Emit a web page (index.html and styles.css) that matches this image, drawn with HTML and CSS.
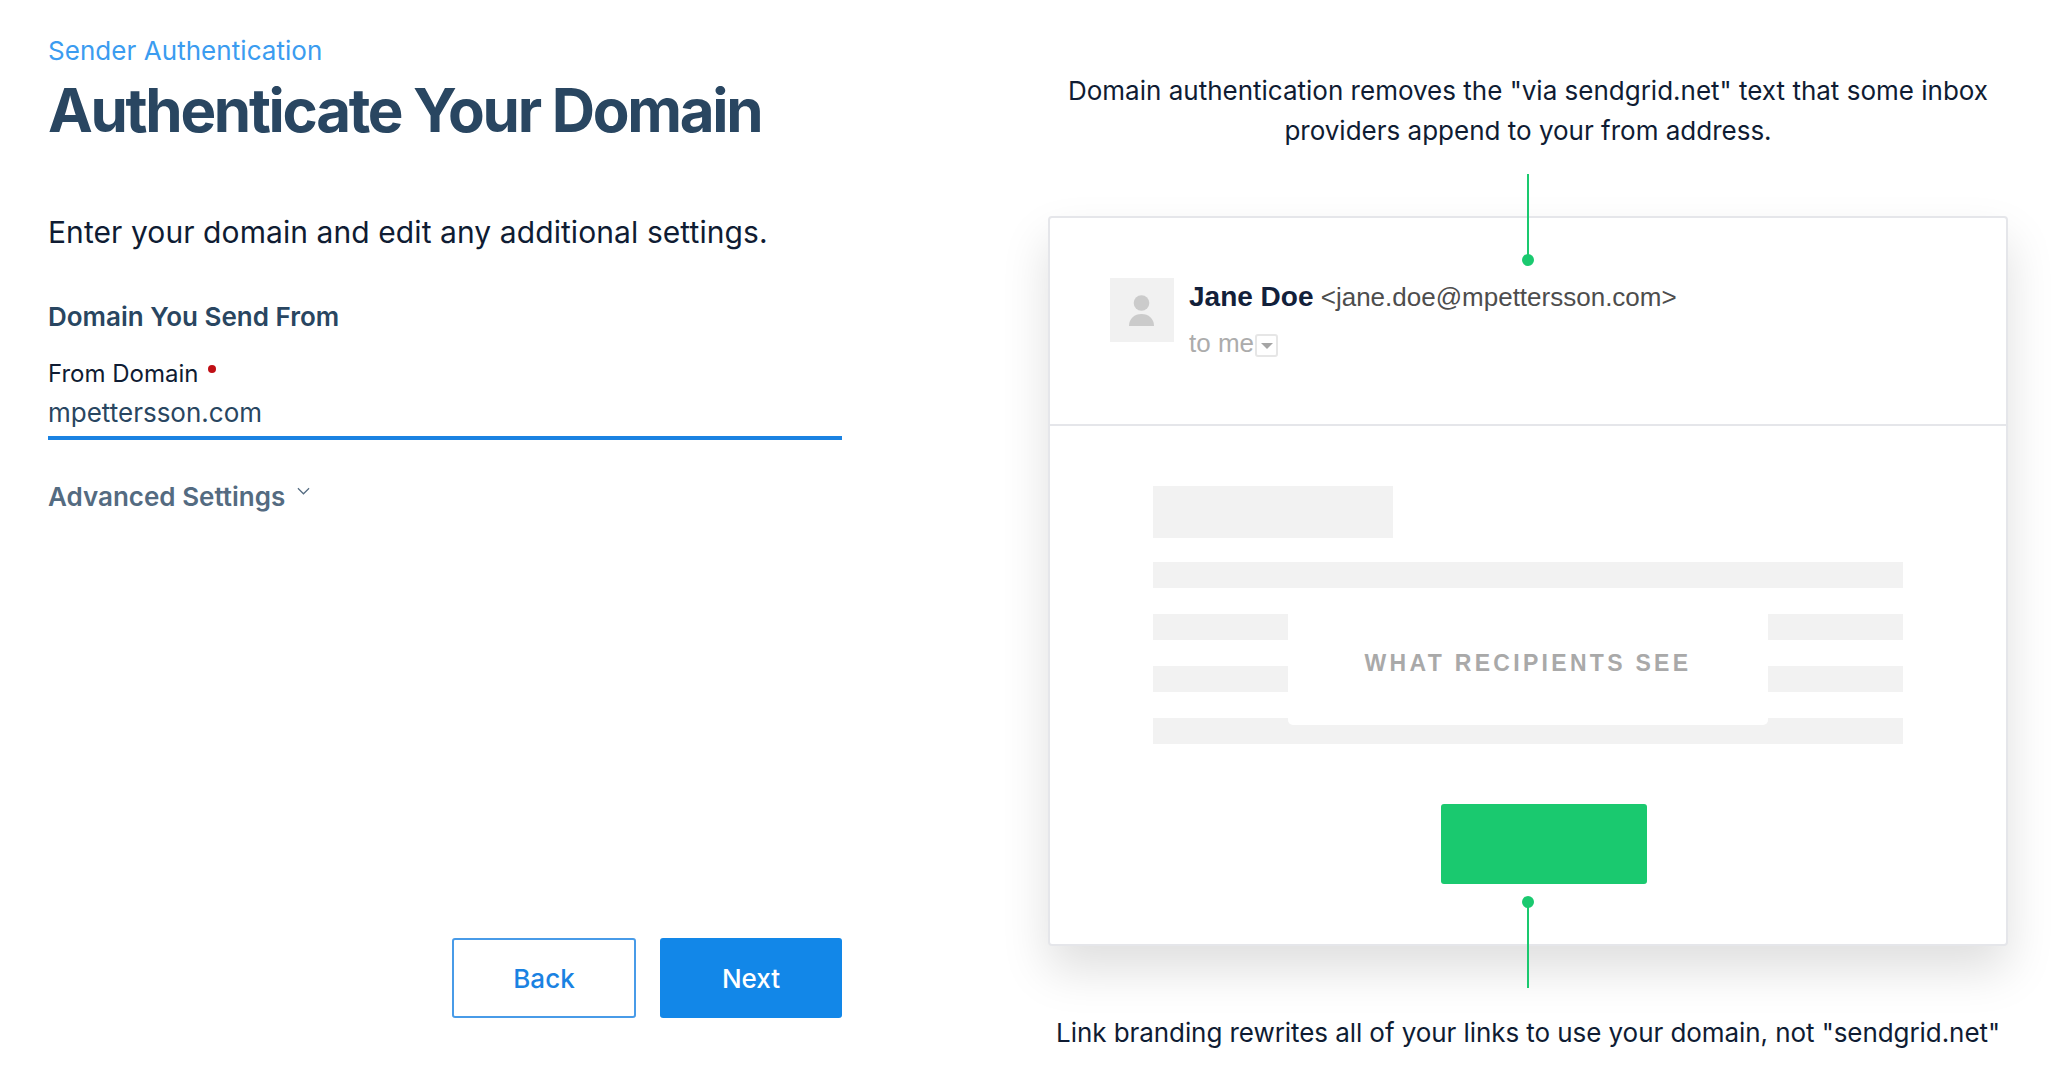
FILE: index.html
```html
<!DOCTYPE html>
<html lang="en">
<head>
<meta charset="utf-8">
<title>Authenticate Your Domain</title>
<link rel="stylesheet" href="styles.css">
</head>
<body>
<main class="page">
  <section class="form">
    <div class="eyebrow">Sender Authentication</div>
    <h1 class="title">Authenticate Your Domain</h1>
    <p class="intro">Enter your domain and edit any additional settings.</p>
    <h2 class="section-head">Domain You Send From</h2>
    <div class="field">
      <div class="field-label">From Domain <span class="required"></span></div>
      <div class="field-value">mpettersson.com</div>
    </div>
    <div class="advanced">
      <span>Advanced Settings</span>
      <svg class="chevron" viewBox="0 0 14 8" width="13" height="8" aria-hidden="true"><path d="M1 1l6 6 6-6" fill="none" stroke="#546b81" stroke-width="1.3"/></svg>
    </div>
    <div class="actions">
      <button class="btn btn-back">Back</button>
      <button class="btn btn-next">Next</button>
    </div>
  </section>
  <section class="preview">
    <p class="note note-top">Domain authentication removes the "via sendgrid.net" text that some inbox providers append to your from address.</p>
    <div class="card">
      <span class="pin pin-top"></span>
      <header class="mail-head">
        <div class="avatar">
          <svg viewBox="0 0 64 64" width="64" height="64" aria-hidden="true"><ellipse cx="31.500" cy="25" rx="7.800" ry="7.800" fill="#cbcbcb"/><path d="M19 48c0-7.500 5.500-12 12.500-12s12.500 4.500 12.500 12z" fill="#cbcbcb"/></svg>
        </div>
        <div class="sender">
          <div class="from-line"><strong class="name">Jane Doe</strong> <span class="addr">&lt;jane.doe@mpettersson.com&gt;</span></div>
          <div class="to-line">to me<span class="caret-box"><span class="caret"></span></span></div>
        </div>
      </header>
      <div class="mail-body">
        <div class="skel skel-title"></div>
        <div class="skel"></div>
        <div class="skel"></div>
        <div class="skel"></div>
        <div class="skel"></div>
        <div class="mask">WHAT RECIPIENTS SEE</div>
        <div class="cta"></div>
      </div>
      <span class="pin pin-bottom"></span>
    </div>
    <p class="note note-bottom">Link branding rewrites all of your links to use your domain, not "sendgrid.net"</p>
  </section>
</main>
</body>
</html>
```
FILE: styles.css
```css
* { box-sizing: border-box; }
html, body { margin: 0; height: 1080px; overflow: hidden; background: #fff; }
body { font-family: Inter, "Liberation Sans", sans-serif; color: #0f1c33; }
.page { display: flex; height: 1080px; padding-left: 48px; }

.form { width: 794px; display: flex; flex-direction: column; }
.eyebrow { margin-top: 35px; font-size: 26px; line-height: 32px; color: #3b9cf0; letter-spacing: .05px; }
.title { margin: 7px 0 0; font-size: 60px; line-height: 72px; font-weight: 700; color: #294661; letter-spacing: -2.300px; }
.intro { margin: 67px 0 0; font-size: 30px; line-height: 38px; color: #0f1c33; letter-spacing: .08px; }
.section-head { margin: 50px 0 0; font-size: 26px; line-height: 32px; font-weight: 600; color: #294661; }
.field { margin-top: 26px; height: 81px; border-bottom: 4px solid #1a82e2; }
.field-label { font-size: 24px; line-height: 30px; }
.required { display: inline-block; width: 8px; height: 8px; border-radius: 50%; background: #c00f15; margin-left: 3px; vertical-align: 9px; }
.field-value { font-size: 26px; line-height: 32px; color: #294661; margin-top: 8px; }
.advanced { margin-top: 40px; display: flex; align-items: flex-start; gap: 12px; font-size: 26px; line-height: 34px; font-weight: 600; color: #546b81; }
.chevron { margin-top: 7px; }
.actions { margin-top: auto; margin-bottom: 62px; display: flex; justify-content: flex-end; gap: 24px; }
.btn { height: 80px; border-radius: 3px; font-family: inherit; font-size: 26px; font-weight: 500; padding: 0; }
.btn-back { width: 184px; background: #fff; border: 2px solid #489be8; color: #1a82e2; }
.btn-next { width: 182px; background: #1287e8; border: 0; color: #fff; }

.preview { margin-left: 206px; width: 960px; position: relative; }
.note { margin: 0; font-size: 26px; line-height: 40px; text-align: center; color: #0f1c33; }
.note-top { margin: 71px 15px 0; height: 81px; }
.card { margin-top: 64px; height: 730px; background: #fff; border: 2px solid #e5e6ea; border-radius: 4px; box-shadow: 0 24px 48px rgba(0, 0, 0, .13); position: relative; }
.mail-head { height: 208px; border-bottom: 2px solid #e5e6ea; padding: 60px 0 0 60px; display: flex; }
.avatar { width: 64px; height: 64px; background: #f1f1f1; flex: none; }
.sender { margin-left: 15px; }
.from-line { font-family: "Liberation Sans", Arial, sans-serif; font-size: 26px; line-height: 30px; color: #4d4d4d; margin-top: 4px; white-space: nowrap; }
.name { font-size: 28px; color: #12203a; }
.to-line { font-family: "Liberation Sans", Arial, sans-serif; font-size: 26px; line-height: 34px; color: #acacac; margin-top: 14px; display: flex; align-items: flex-end; }
.caret-box { width: 23px; height: 23px; border: 2px solid #e6e6e6; border-radius: 3px; display: flex; align-items: center; justify-content: center; margin-left: 1px; margin-bottom: 3px; }
.caret { width: 0; height: 0; border: 6px solid transparent; border-top: 6px solid #a5a5a5; border-bottom: 0; }
.mail-body { padding: 60px 103px 0; position: relative; }
.skel { height: 26px; background: #f2f2f2; margin-bottom: 26px; }
.skel-title { width: 240px; height: 52px; margin-bottom: 24px; }
.mask { position: absolute; left: 238px; top: 172px; width: 480px; height: 127px; padding-top: 4px; background: #fff; border-radius: 0 0 5px 5px; display: flex; align-items: center; justify-content: center; font-family: "Liberation Sans", Arial, sans-serif; font-size: 23px; font-weight: 700; letter-spacing: 3.300px; color: #a9a9a9; }
.cta { width: 206px; height: 80px; background: #1ac96f; border-radius: 3px; margin: 60px 0 0 288px; }

.pin { position: absolute; left: 477px; width: 2px; background: #1ac96f; }
.pin::after { content: ""; position: absolute; left: -5px; width: 12px; height: 12px; border-radius: 50%; background: #1ac96f; }
.pin-top { top: -44px; height: 88px; }
.pin-top::after { bottom: -4px; }
.pin-bottom { top: 682px; height: 88px; }
.pin-bottom::after { top: -4px; }
.note-bottom { margin-top: 67px; position: relative; white-space: nowrap; letter-spacing: -.07px; }
```
